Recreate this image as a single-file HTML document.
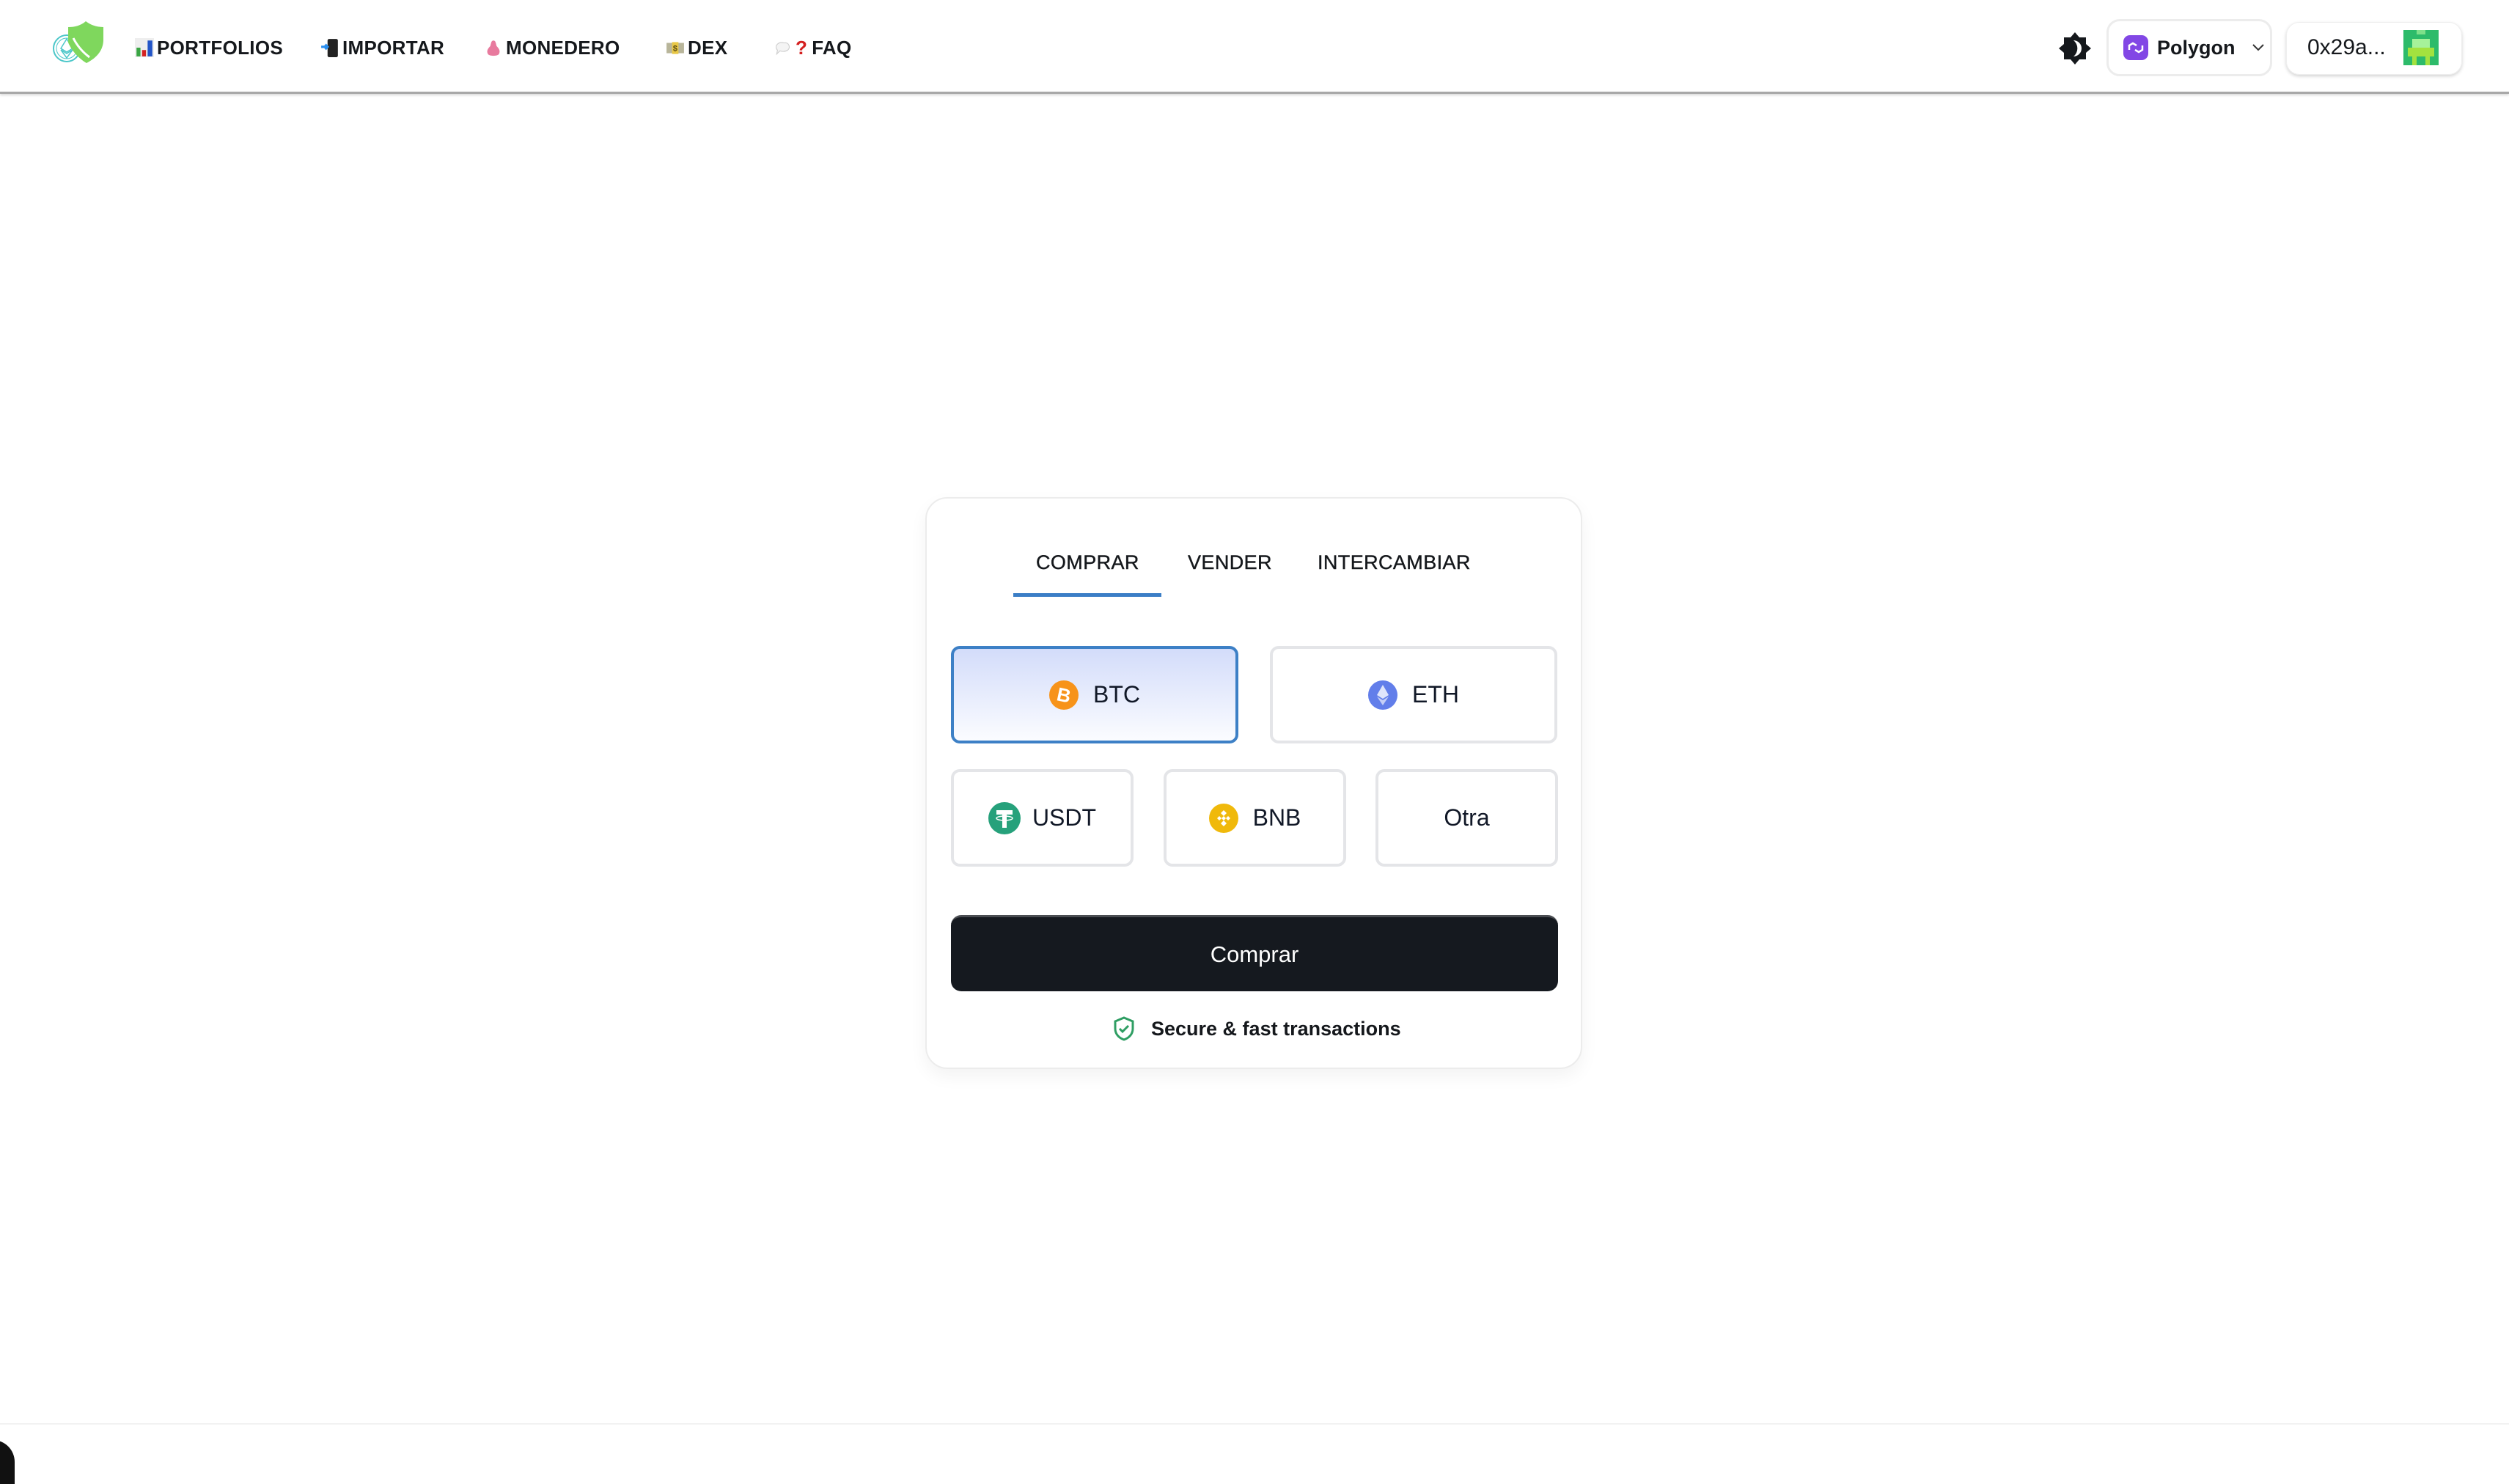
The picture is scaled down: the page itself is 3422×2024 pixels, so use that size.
<!DOCTYPE html>
<html><head><meta charset="utf-8"><style>
*{margin:0;padding:0;box-sizing:border-box}
body{width:3422px;height:1994px;background:#fff;position:relative;overflow:hidden;font-family:"Liberation Sans","DejaVu Sans",sans-serif;color:#111}
.abs{position:absolute}
.nav{position:absolute;left:0;top:0;width:3422px;height:128px;border-bottom:3px solid #a8a8a8;box-shadow:0 2px 3px rgba(0,0,0,.15)}
.ni{position:absolute;top:46px;font-size:26px;font-weight:bold;letter-spacing:0.3px;color:#15181c;display:flex;align-items:center;height:38px;white-space:nowrap}
.ni .ic{display:inline-block;width:26px;height:26px;margin-right:4px}
.card{left:1262px;top:678px;width:896px;height:780px;border:2px solid #ececec;border-radius:30px;box-shadow:0 10px 24px rgba(0,0,0,.05)}
.tab{position:absolute;top:752px;font-size:27px;color:#15181c;letter-spacing:.4px;-webkit-text-stroke:0.4px #15181c}
.cb{position:absolute;border:4px solid #e4e5e8;border-radius:12px;background:#fff;display:flex;align-items:center;justify-content:center;font-size:32px;color:#111827}
.cb svg{margin-right:20px}
</style></head><body>
<div class="nav">
 <svg class="abs" style="left:70px;top:26px" width="75" height="62" viewBox="0 0 75 62">
  <circle cx="21" cy="40" r="18" fill="none" stroke="#4cc7c9" stroke-width="2"/>
  <circle cx="21" cy="40" r="14" fill="none" stroke="#4cc7c9" stroke-width="1"/>
  <path d="M21 27 L13 40 L21 45 L29 40 Z M13 42 L21 53 L29 42 L21 47 Z" fill="none" stroke="#4cc7c9" stroke-width="1.5"/>
  <path d="M47 3 C55 9 63 11 71 11 L71 28 C71 44 60 54 48 60 C38 54 28 44 23 32 L23 11 C32 11 40 9 47 3 Z" fill="#7fd75d"/>
  <path d="M30 26 C36 38 44 46 52 52" stroke="#fff" stroke-width="3" fill="none"/>
 </svg>
 <div class="ni" style="left:184px"><svg class="ic" viewBox="0 0 24 24"><rect width="24" height="24" fill="#eee"/><rect x="2" y="12" width="5" height="11" fill="#3aa544"/><rect x="9" y="15" width="5" height="8" fill="#d42222"/><rect x="16" y="3" width="6" height="20" fill="#2456c8"/></svg>PORTFOLIOS</div>
 <div class="ni" style="left:437px"><svg class="ic" viewBox="0 0 24 24"><rect x="9" y="1" width="13" height="23" rx="2" fill="#222"/><path d="M1 11h8M6 8l3 3-3 3" stroke="#2a8ff0" stroke-width="3" fill="none"/></svg>IMPORTAR</div>
 <div class="ni" style="left:660px"><svg class="ic" viewBox="0 0 24 24"><path d="M12 3c3 0 3 4 4 7 3 3 5 6 3 10-2 3-12 3-14 0-2-4 0-7 3-10 1-3 1-7 4-7z" fill="#e87a9e"/></svg>MONEDERO</div>
 <div class="ni" style="left:908px"><svg class="ic" viewBox="0 0 24 24"><rect x="1" y="6" width="22" height="13" fill="#b8b59a"/><rect x="8" y="5" width="8" height="15" fill="#e9c846"/><text x="12" y="16" font-size="10" text-anchor="middle" fill="#5a4a10">$</text></svg>DEX</div>
 <div class="ni" style="left:1055px"><svg class="ic" viewBox="0 0 24 24"><path d="M4 14c-3-5 3-10 9-8 6-1 9 5 5 9-3 2-7 2-10 1l-4 4 1-5z" fill="#f4f4f4" stroke="#ccc"/></svg><span style="color:#d42020;margin-right:6px">?</span>FAQ</div>

 <svg class="abs" style="left:2806px;top:42px" width="48" height="48" viewBox="0 0 48 48">
  <path d="M24 2 L30 9 L39 9 L39 18 L46 24 L39 30 L39 39 L30 39 L24 46 L18 39 L9 39 L9 30 L2 24 L9 18 L9 9 L18 9 Z" fill="#15181c"/>
  <path d="M22 13 A11 11 0 0 1 22 35 A14 14 0 0 0 22 13 Z" fill="#fff"/>
 </svg>
 <div class="abs" style="left:2873px;top:26px;width:226px;height:78px;border:3px solid #ececec;border-radius:18px;display:flex;align-items:center;font-size:27px;font-weight:bold;color:#15181c">
  <svg style="margin-left:20px;margin-right:12px" width="34" height="34" viewBox="0 0 34 34"><rect width="34" height="34" rx="9" fill="#8247e5"/><path d="M8 20v-6l5-3 5 3M26 14v6l-5 3-5-3" stroke="#fff" stroke-width="2.5" fill="none"/></svg>Polygon
  <svg style="margin-left:22px" width="18" height="12" viewBox="0 0 18 12"><path d="M2 2l7 7 7-7" stroke="#333" stroke-width="2" fill="none"/></svg>
 </div>
 <div class="abs" style="left:3118px;top:30px;width:240px;height:72px;border-radius:18px;box-shadow:0 2px 5px rgba(0,0,0,.18);border:1px solid #eee;font-size:30px;color:#15181c">
  <span class="abs" style="left:28px;top:17px">0x29a...</span>
  <svg class="abs" style="left:159px;top:9px" width="48" height="50" viewBox="0 0 8 8" shape-rendering="crispEdges">
   <rect width="8" height="8" fill="#2dbb6a"/><rect x="3" y="0" width="2" height="1" fill="#7ee08a"/><rect x="2" y="2" width="4" height="2" fill="#a6f29a"/><rect x="1" y="4" width="6" height="2" fill="#a3e23f"/><rect x="2" y="6" width="1" height="2" fill="#a3e23f"/><rect x="5" y="6" width="1" height="2" fill="#a3e23f"/>
  </svg>
 </div>
</div>

<div class="abs card"></div>
<div class="tab" style="left:1413px">COMPRAR</div>
<div class="tab" style="left:1620px">VENDER</div>
<div class="tab" style="left:1797px">INTERCAMBIAR</div>
<div class="abs" style="left:1382px;top:809px;width:202px;height:5px;background:#3b7ec6"></div>

<div class="cb" style="left:1297px;top:881px;width:392px;height:133px;border-color:#3d80c6;background:linear-gradient(#d3dcfa,#fbfcff)">
 <svg width="40" height="40" viewBox="0 0 40 40"><circle cx="20" cy="20" r="20" fill="#f7931a"/><text x="20" y="29" font-size="26" font-weight="bold" text-anchor="middle" fill="#fff" font-family="Liberation Sans" transform="rotate(12 20 20)">B</text></svg>BTC</div>
<div class="cb" style="left:1732px;top:881px;width:392px;height:133px">
 <svg width="40" height="40" viewBox="0 0 40 40"><circle cx="20" cy="20" r="20" fill="#627eea"/><path d="M20 6l-8 14 8 5 8-5z" fill="#dfe5fb"/><path d="M12 22l8 12 8-12-8 5z" fill="#c5cff7"/></svg>ETH</div>
<div class="cb" style="left:1297px;top:1049px;width:249px;height:133px">
 <svg width="44" height="44" viewBox="0 0 44 44" style="margin-right:16px"><circle cx="22" cy="22" r="22" fill="#26a17b"/><path d="M11 11h22v6h-8v18h-6V17h-8z" fill="#fff"/><ellipse cx="22" cy="22" rx="11" ry="3" fill="none" stroke="#fff" stroke-width="1.5"/></svg>USDT</div>
<div class="cb" style="left:1587px;top:1049px;width:249px;height:133px">
 <svg width="40" height="40" viewBox="0 0 40 40"><circle cx="20" cy="20" r="20" fill="#f0b90b"/><path d="M20 9l4 4-4 4-4-4zM11 20l3-3 3 3-3 3zM29 20l-3-3-3 3 3 3zM20 23l4 4-4 4-4-4zM20 17l3 3-3 3-3-3z" fill="#fff"/></svg>BNB</div>
<div class="cb" style="left:1876px;top:1049px;width:249px;height:133px">Otra</div>

<div class="abs" style="left:1297px;top:1248px;width:828px;height:104px;background:#15191f;border-radius:14px;border-top:3px solid #4a4d52;color:#fff;font-size:31px;display:flex;align-items:center;justify-content:center">Comprar</div>

<div class="abs" style="left:1518px;top:1386px;display:flex;align-items:center;font-size:27px;font-weight:bold;color:#15181c">
 <svg width="30" height="34" viewBox="0 0 30 34" style="margin-right:22px"><path d="M15 2l12 5v10c0 8-6 13-12 15C9 30 3 25 3 17V7z" fill="none" stroke="#2f9e63" stroke-width="3"/><path d="M9 17l4 4 8-8" fill="none" stroke="#2f9e63" stroke-width="3"/></svg>Secure &amp; fast transactions</div>

<div class="abs" style="left:0;top:1941px;width:3422px;height:2px;background:#f2f2f2"></div>
<div class="abs" style="left:-20px;top:1964px;width:40px;height:60px;background:#111;border-radius:0 30px 0 0"></div>
</body></html>
